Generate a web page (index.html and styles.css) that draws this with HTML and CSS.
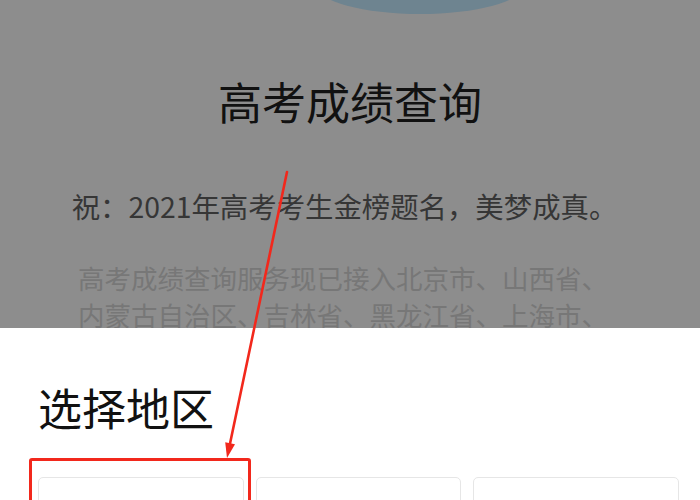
FILE: index.html
```html
<!DOCTYPE html>
<html lang="zh-CN">
<head>
<meta charset="utf-8">
<title>高考成绩查询</title>
<link rel="stylesheet" href="styles.css">
</head>
<body>
<div class="page">
  <section class="backdrop">
    <div class="banner"></div>
    <h1 class="title">高考成绩查询</h1>
    <p class="wish">祝：2021年高考考生金榜题名，美梦成真。</p>
    <p class="desc">高考成绩查询服务现已接入北京市、山西省、<br>内蒙古自治区、吉林省、黑龙江省、上海市、</p>
  </section>
  <section class="sheet">
    <h2 class="sheet-title">选择地区</h2>
    <div class="regions">
      <div class="region"></div>
      <div class="region"></div>
      <div class="region"></div>
    </div>
  </section>
  <div class="highlight"></div>
  <svg class="arrow" width="700" height="500" viewBox="0 0 700 500">
    <line x1="287" y1="172" x2="229.5" y2="446" stroke="#f2281c" stroke-width="2.6" stroke-linecap="round"/>
    <polygon points="227,458 235,444.3 225.2,442.3" fill="#f2281c"/>
  </svg>
</div>
</body>
</html>
```
FILE: styles.css
```css
html, body {
  margin: 0;
  padding: 0;
}
body {
  width: 700px;
  height: 500px;
  overflow: hidden;
  font-family: "Noto Sans CJK SC", "Noto Sans", sans-serif;
  background: #ffffff;
}
.page {
  position: relative;
  width: 700px;
  height: 500px;
  overflow: hidden;
}
.backdrop {
  height: 328px;
  background: #8d8d8d;
  overflow: hidden;
  display: flex;
  flex-direction: column;
}
.banner {
  flex: none;
  width: 206px;
  height: 56px;
  margin-top: -42px;
  margin-left: 317px;
  border-radius: 50%;
  background: #6e8490;
}
.title {
  flex: none;
  margin: 63px 0 0 0;
  font-size: 44px;
  line-height: 48px;
  font-weight: 400;
  color: #111111;
  text-align: center;
}
.wish {
  flex: none;
  margin: 65px 0 0 0;
  padding-right: 11px;
  font-size: 28.4px;
  line-height: 32px;
  color: #363636;
  text-align: center;
  white-space: nowrap;
}
.desc {
  flex: none;
  margin: 37px 0 0 0;
  padding-right: 14px;
  font-size: 26.5px;
  line-height: 37px;
  color: #777777;
  text-align: center;
  white-space: nowrap;
}
.sheet {
  background: #ffffff;
  padding: 55px 21px 0 38px;
}
.sheet-title {
  margin: 0;
  font-size: 44px;
  line-height: 48px;
  font-weight: 400;
  color: #111111;
}
.regions {
  margin-top: 46px;
  display: grid;
  grid-template-columns: repeat(3, 1fr);
  gap: 12px;
}
.region {
  height: 90px;
  border: 1.5px solid #e6e6e6;
  border-radius: 5px;
  background: #ffffff;
}
.highlight {
  position: absolute;
  left: 29px;
  top: 458px;
  width: 216px;
  height: 80px;
  border: 3px solid #f2281c;
  border-radius: 3px;
}
.arrow {
  position: absolute;
  left: 0;
  top: 0;
}
```
